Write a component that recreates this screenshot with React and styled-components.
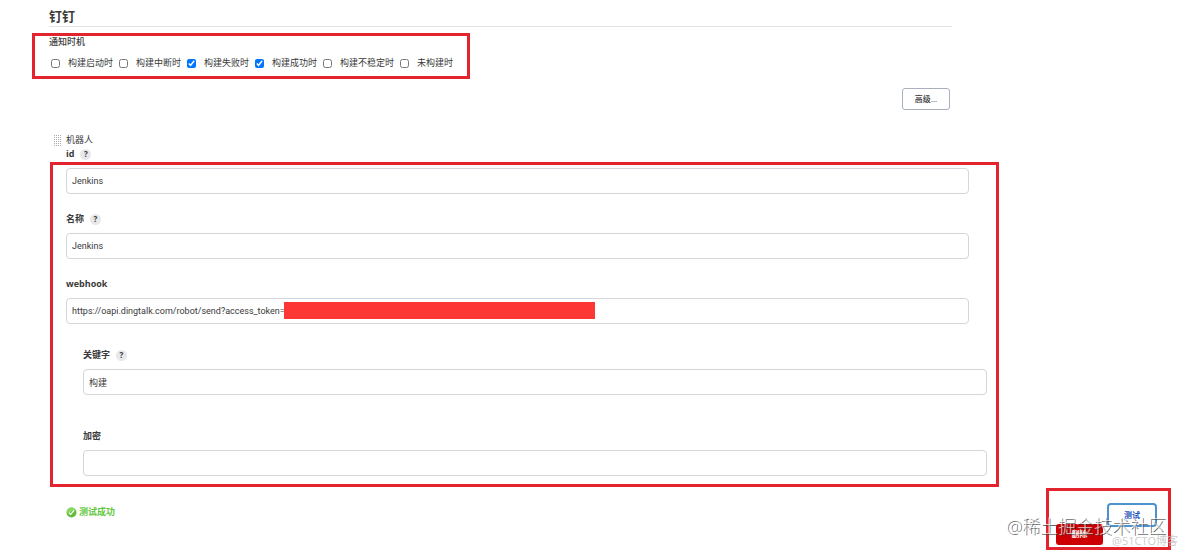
import React from 'react';
import styled, {createGlobalStyle} from "styled-components";

const GlobalStyle = createGlobalStyle`
  * {
    box-sizing: border-box;
  }

  body {
    margin: 0;
    background-color: #fff;
    color: #3a3a3a;
    font-family: "Open Sans", "Noto Sans CJK SC", sans-serif;
    font-size: 9px;
  }

  button, input {
    font-family: inherit;
    font-size: inherit;
    color: inherit;
  }
`;

const Page = styled.main`
  position: relative;
  display: flex;
  flex-direction: column;
`;

const Title = styled.h1`
  margin: 0 232px 0 49px;
  padding-top: 6px;
  border-bottom: 1px solid #e3e3e6;
  font-size: 13px;
  line-height: 20px;
  font-weight: 700;
`;

const Timing = styled.fieldset`
  align-self: flex-start;
  margin: 6px 0 0 32px;
  padding: 0 14px 5px 14px;
  border: 3px solid #e3232d;
`;

const TimingTitle = styled.div`
  line-height: 12px;
  font-weight: 500;
`;

const Options = styled.div`
  display: flex;
  flex-wrap: wrap;
  gap: 6px;
  margin: 7px 0 0 2px;
`;

const Option = styled.label`
  display: flex;
  align-items: center;
  gap: 8px;
  line-height: 16px;
`;

const Checkbox = styled.input`
  width: 9px;
  height: 9px;
  margin: 0;
  accent-color: #0075ff;
`;

const AdvancedButton = styled.button`
  align-self: flex-end;
  width: 48px;
  height: 22px;
  margin: 9px 234px 0 0;
  padding: 0 0 2px;
  border: 1px solid #a9b0bb;
  border-radius: 3px;
  background-color: #fff;
  font-size: 8px;
  font-weight: 500;
`;

const Robot = styled.div`
  display: flex;
  align-items: center;
  gap: 4px;
  margin: 23px 0 0 53px;
  line-height: 14px;
`;

const DragHandle = styled.span`
  width: 9px;
  height: 12px;
  background-color: #aaa;
  background-image: linear-gradient(#fff 1px, transparent 1px), linear-gradient(90deg, #fff 1px, transparent 1px);
  background-size: 2px 2px;
`;

const LabelRow = styled.div`
  display: flex;
  align-items: center;
  gap: 6px;
  line-height: 14px;
  font-weight: 700;
`;

const IdRow = styled(LabelRow)`
  margin-left: 66px;
`;

const Help = styled.button`
  width: 11px;
  height: 11px;
  padding: 0;
  border: none;
  border-radius: 50%;
  background-color: #e8e8ea;
  font-size: 8px;
  line-height: 10px;
  font-weight: 700;
`;

const Fields = styled.section`
  margin: 1px 185px 0 50px;
  padding: 3px 0 8px;
  border: 3px solid #e3232d;
`;

const Field = styled.div`
  display: flex;
  flex-direction: column;
  gap: 7px;
  margin: ${({$top}) => $top || 0}px ${({$nested}) => $nested ? '9px' : '27px'} 0 ${({$nested}) => $nested ? '30px' : '13px'};
`;

const InputWrap = styled.div`
  position: relative;
  display: flex;
`;

const TextInput = styled.input`
  width: 100%;
  height: 26px;
  padding: 0 5px;
  border: 1px solid #d3d6da;
  border-radius: 4px;
  background-color: #fff;
  font-family: Roboto, "Noto Sans CJK SC", sans-serif;
  outline: none;
`;

const TokenMask = styled.span`
  position: absolute;
  top: 4px;
  left: 218px;
  width: 311px;
  height: 17px;
  background-color: #fd3734;
`;

const Footer = styled.footer`
  display: flex;
  justify-content: space-between;
  align-items: flex-start;
  margin: 1px 13px 0 66px;
`;

const Status = styled.div`
  display: flex;
  align-items: center;
  gap: 2px;
  margin-top: 16px;
  color: #62c73c;
  line-height: 16px;
  font-weight: 700;
`;

const Actions = styled.div`
  display: flex;
  align-items: flex-start;
  gap: 4px;
  padding: 12px 11px 2px 7px;
  border: 3px solid #e3232d;
`;

const DeleteButton = styled.button`
  width: 47px;
  height: 21px;
  margin-top: 21px;
  padding: 0 0 2px;
  border: none;
  border-radius: 3px;
  background-color: #cc0003;
  color: #fff;
  font-size: 8px;
  font-weight: 700;
`;

const TestButton = styled.button`
  width: 50px;
  height: 24px;
  padding: 0 0 2px;
  border: 2px solid #4b92cf;
  border-radius: 4px;
  background-color: #fff;
  color: #1f55c0;
  font-size: 8px;
  font-weight: 700;
`;

const Watermark = styled.span`
  position: absolute;
  right: 18px;
  bottom: 12px;
  color: rgba(255, 255, 255, 0.75);
  text-shadow: 1px 1px 0 rgba(60, 60, 60, 0.8);
  font-size: 18px;
  line-height: 24px;
  font-weight: 300;
  white-space: nowrap;
  pointer-events: none;
`;

const SmallWatermark = styled(Watermark)`
  right: 6px;
  bottom: 1px;
  color: rgba(190, 190, 190, 0.8);
  text-shadow: none;
  font-size: 11px;
  line-height: 16px;
  font-weight: 400;
`;

const options = [
    {id: 'start', text: '构建启动时', checked: false},
    {id: 'abort', text: '构建中断时', checked: false},
    {id: 'failure', text: '构建失败时', checked: true},
    {id: 'success', text: '构建成功时', checked: true},
    {id: 'unstable', text: '构建不稳定时', checked: false},
    {id: 'notBuilt', text: '未构建时', checked: false},
];

const SuccessIcon = () => (
    <svg width="11" height="11" viewBox="0 0 11 11" aria-hidden="true">
        <circle cx="5.5" cy="5.5" r="5" fill="#62bd3a"/>
        <path d="M1.2 6.5a4.4 4.4 0 0 1 8-3.6z" fill="#8bd765"/>
        <path d="M3 5.8l1.6 1.6L8.2 3.4" fill="none" stroke="#fff" strokeWidth="1.3"/>
    </svg>
);

const FormField = ({id, label, value, help, masked, top, nested}) => (
    <Field $top={top} $nested={nested}>
        {label && (
            <LabelRow>
                <label htmlFor={id}>{label}</label>
                {help && <Help type="button">?</Help>}
            </LabelRow>
        )}
        <InputWrap>
            <TextInput id={id} type="text" defaultValue={value}/>
            {masked && <TokenMask/>}
        </InputWrap>
    </Field>
);

const App = () => {
    return (
        <>
            <GlobalStyle/>
            <Page>
                <Title>钉钉</Title>
                <Timing>
                    <TimingTitle>通知时机</TimingTitle>
                    <Options>
                        {options.map(option => (
                            <Option key={option.id}>
                                <Checkbox type="checkbox" defaultChecked={option.checked}/>
                                {option.text}
                            </Option>
                        ))}
                    </Options>
                </Timing>
                <AdvancedButton type="button">高级...</AdvancedButton>
                <Robot>
                    <DragHandle/>
                    机器人
                </Robot>
                <IdRow>
                    <label htmlFor="robot-id">id</label>
                    <Help type="button">?</Help>
                </IdRow>
                <Fields>
                    <FormField id="robot-id" value="Jenkins"/>
                    <FormField id="robot-name" label="名称" value="Jenkins" help top={18}/>
                    <FormField
                        id="webhook"
                        label="webhook"
                        value="https://oapi.dingtalk.com/robot/send?access_token="
                        masked
                        top={18}
                    />
                    <FormField id="keyword" label="关键字" value="构建" help nested top={24}/>
                    <FormField id="secret" label="加密" value="" nested top={34}/>
                </Fields>
                <Footer>
                    <Status>
                        <SuccessIcon/>
                        测试成功
                    </Status>
                    <Actions>
                        <DeleteButton type="button">删除</DeleteButton>
                        <TestButton type="button">测试</TestButton>
                    </Actions>
                </Footer>
                <Watermark>@稀土掘金技术社区</Watermark>
                <SmallWatermark>@51CTO博客</SmallWatermark>
            </Page>
        </>
    );
};

export default App;
